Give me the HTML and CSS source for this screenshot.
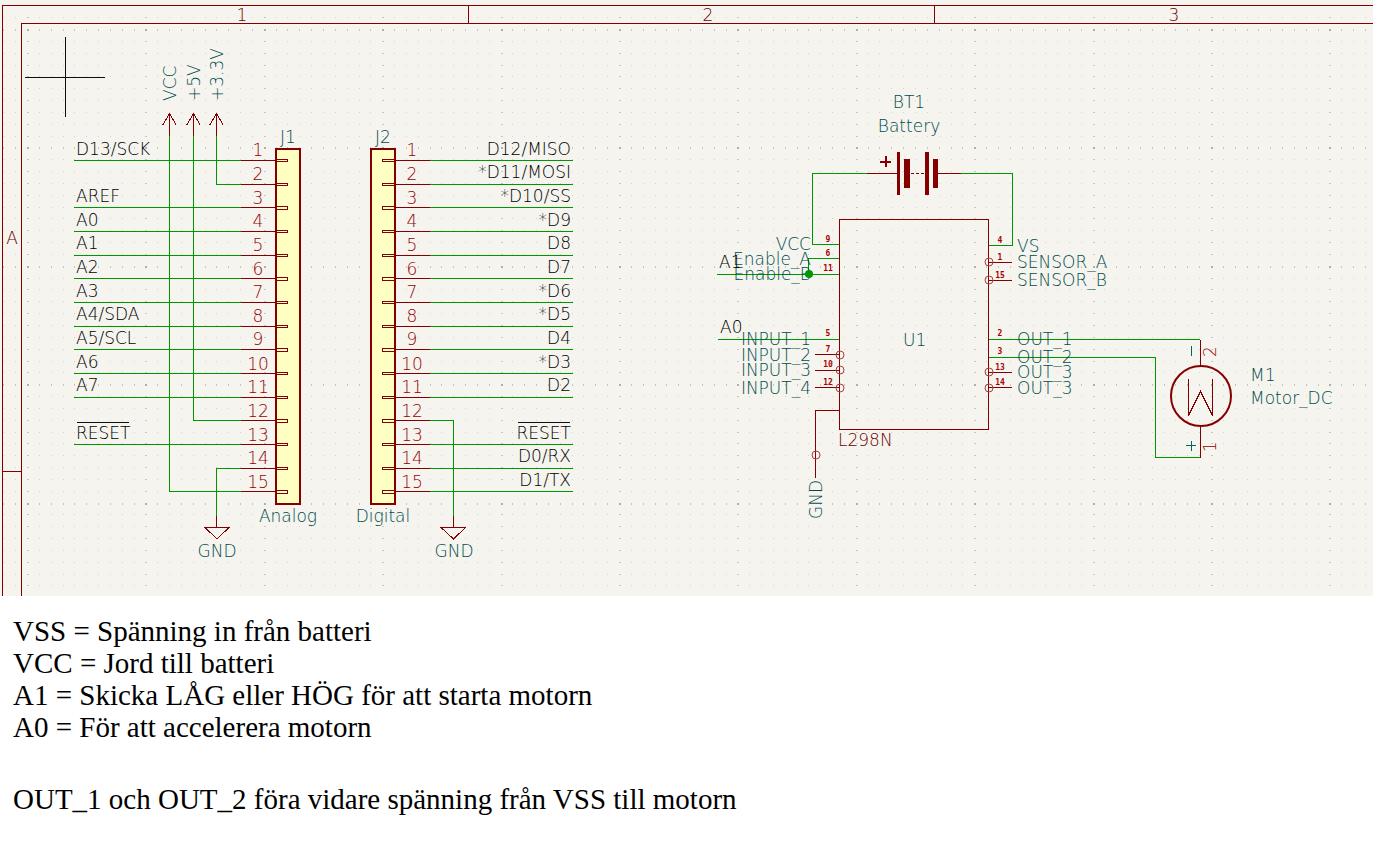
FILE: index.html
```html
<!DOCTYPE html>
<html lang="sv">
<head>
<meta charset="utf-8">
<title>L298N motor schematic</title>
<link rel="stylesheet" href="styles.css">
</head>
<body>
<main class="page">
<svg class="schematic" viewBox="0 0 1373 596" role="img" aria-label="Schematic">
  <g class="grid">
    <path class="grid-minor" id="grid-minor"/>
    <path class="grid-line" id="grid-line"/>
    <path class="grid-major" id="grid-major"/>
  </g>

  <!-- Sheet frame -->
  <path class="symbol" d="M1373 5.5H2.5V596M1373 23.5H21.5V596M468.5 5V23M934.5 5V23M2 471.5H21"/>
  <g class="text frame-text middle">
    <text x="242" y="21">1</text><text x="708" y="21">2</text><text x="1174" y="21">3</text>
    <text x="12" y="244">A</text>
  </g>
  <path class="cursor" d="M25 77.5H105M65.5 37V117"/>

  <!-- Wires -->
  <path class="wire" d="M74 160.5H241M74 207.5H241M74 231.5H241M74 255.5H241M74 278.5H241M74 302.5H241M74 326.5H241M74 349.5H241M74 373.5H241M74 397.5H241M74 444.5H241
    M169.5 136V491.5H241M193.5 136V420.5H241M216.5 136V184.5H241M241 468.5H216.5V516"/>
  <path class="wire" d="M430 160.5H573M430 184.5H573M430 207.5H573M430 231.5H573M430 255.5H573M430 278.5H573M430 302.5H573M430 326.5H573M430 349.5H573M430 373.5H573M430 397.5H573M430 444.5H573M430 468.5H573M430 491.5H573M430 420.5H453.5V516"/>
  <path class="wire" d="M867 173.5H812.5V244.5H839M961 173.5H1012.5V245.5H989M717 274.5H839M808.5 274V258.5H839M718 339.5H839M989 339.5H1200M989 357.5H1155.5V457.5H1200"/>

  <!-- Connector J1 -->
  <rect class="connector" x="276" y="149" width="24" height="355"/>
  <path class="symbol" d="M241 160.5H276M241 184.5H276M241 207.5H276M241 231.5H276M241 255.5H276M241 278.5H276M241 302.5H276M241 326.5H276M241 349.5H276M241 373.5H276M241 397.5H276M241 420.5H276M241 444.5H276M241 468.5H276M241 491.5H276"/>
  <path class="symbol" d="M276 159.5h11.5v2H276M276 183.5h11.5v2H276M276 206.5h11.5v3H276M276 230.5h11.5v2H276M276 254.5h11.5v2H276M276 277.5h11.5v3H276M276 301.5h11.5v2H276M276 325.5h11.5v2H276M276 348.5h11.5v3H276M276 372.5h11.5v2H276M276 396.5h11.5v2H276M276 419.5h11.5v3H276M276 443.5h11.5v2H276M276 467.5h11.5v2H276M276 490.5h11.5v3H276"/>
  <g class="text pin-text middle">
    <text x="258" y="156">1</text><text x="258" y="180">2</text><text x="258" y="204">3</text>
    <text x="258" y="227">4</text><text x="258" y="251">5</text><text x="258" y="275">6</text>
    <text x="258" y="298">7</text><text x="258" y="322">8</text><text x="258" y="345">9</text>
    <text x="258" y="370">10</text><text x="258" y="393">11</text><text x="258" y="417">12</text>
    <text x="258" y="441">13</text><text x="258" y="464">14</text><text x="258" y="488">15</text>
  </g>
  <g class="text label-text">
    <text x="76" y="155">D13/SCK</text><text x="76" y="202">AREF</text><text x="76" y="226">A0</text>
    <text x="76" y="249">A1</text><text x="76" y="273">A2</text><text x="76" y="297">A3</text>
    <text x="76" y="320">A4/SDA</text><text x="76" y="344">A5/SCL</text><text x="76" y="368">A6</text>
    <text x="76" y="391">A7</text><text x="76" y="439">RESET</text>
  </g>
  <path class="overline" d="M77 422.5H129M518 422.5H570"/>

  <!-- Connector J2 -->
  <rect class="connector" x="371" y="149" width="24" height="355"/>
  <path class="symbol" d="M395 160.5H430M395 184.5H430M395 207.5H430M395 231.5H430M395 255.5H430M395 278.5H430M395 302.5H430M395 326.5H430M395 349.5H430M395 373.5H430M395 397.5H430M395 420.5H430M395 444.5H430M395 468.5H430M395 491.5H430"/>
  <path class="symbol" d="M394 159.5h-11.5v2H394M394 183.5h-11.5v2H394M394 206.5h-11.5v3H394M394 230.5h-11.5v2H394M394 254.5h-11.5v2H394M394 277.5h-11.5v3H394M394 301.5h-11.5v2H394M394 325.5h-11.5v2H394M394 348.5h-11.5v3H394M394 372.5h-11.5v2H394M394 396.5h-11.5v2H394M394 419.5h-11.5v3H394M394 443.5h-11.5v2H394M394 467.5h-11.5v2H394M394 490.5h-11.5v3H394"/>
  <g class="text pin-text middle">
    <text x="412" y="156">1</text><text x="412" y="180">2</text><text x="412" y="204">3</text>
    <text x="412" y="227">4</text><text x="412" y="251">5</text><text x="412" y="275">6</text>
    <text x="412" y="298">7</text><text x="412" y="322">8</text><text x="412" y="345">9</text>
    <text x="412" y="370">10</text><text x="412" y="393">11</text><text x="412" y="417">12</text>
    <text x="412" y="441">13</text><text x="412" y="464">14</text><text x="412" y="488">15</text>
  </g>
  <g class="text label-text end">
    <text x="571" y="155">D12/MISO</text><text x="571" y="178">*D11/MOSI</text><text x="571" y="202">*D10/SS</text>
    <text x="571" y="226">*D9</text><text x="571" y="249">D8</text><text x="571" y="273">D7</text>
    <text x="571" y="297">*D6</text><text x="571" y="320">*D5</text><text x="571" y="344">D4</text>
    <text x="571" y="368">*D3</text><text x="571" y="391">D2</text><text x="571" y="439">RESET</text>
    <text x="571" y="462">D0/RX</text><text x="571" y="486">D1/TX</text>
  </g>
  <g class="text name-text middle">
    <text x="288" y="143">J1</text><text x="383" y="143">J2</text>
    <text x="288" y="522">Analog</text><text x="383" y="522">Digital</text>
    <text x="217" y="557">GND</text><text x="454" y="557">GND</text>
  </g>

  <!-- Power symbols -->
  <path class="symbol" d="M169.5 136V113M162.5 125.5L169.5 113.5L176.5 125.5M193.5 136V113M186.5 125.5L193.5 113.5L200.5 125.5M216.5 136V113M209.5 125.5L216.5 113.5L223.5 125.5
    M216.5 516V527.5M205 527.5H229L217 539ZM453.5 516V527.5M441 527.5H465.5L453.5 539Z"/>
  <g class="text name-text">
    <text transform="translate(176 101) rotate(-90)">VCC</text>
    <text transform="translate(200 101) rotate(-90)">+5V</text>
    <text transform="translate(223 101) rotate(-90)">+3.3V</text>
  </g>

  <!-- Battery BT1 -->
  <path class="symbol" d="M867 173.5H897M938 173.5H961M911 173.5H914M916 173.5H919M921 173.5H924"/>
  <path class="plate" d="M897 152h3v43h-3zM904 159h6v29h-6zM925 152h4v43h-4zM933 159h5v29h-5z"/>
  <path class="symbol-bold" d="M880 162H891M886 156V167"/>
  <g class="text name-text middle"><text x="909" y="108">BT1</text><text x="909" y="132">Battery</text></g>

  <!-- Driver U1 -->
  <rect class="symbol" x="839.5" y="219.5" width="149" height="210"/>
  <path class="symbol" d="M815 354.5H839M815 370.5H839M815 387.5H839M839 410.5H815.5V478M989 262.5H1012M989 280.5H1012M989 372.5H1012M989 387.5H1012"/>
  <g class="open-pin">
    <circle cx="840" cy="355" r="4"/><circle cx="840" cy="370" r="4"/><circle cx="840" cy="388" r="4"/>
    <circle cx="816" cy="455" r="4"/><circle cx="989" cy="262" r="4"/><circle cx="989" cy="280" r="4"/>
    <circle cx="989" cy="372" r="4"/><circle cx="989" cy="388" r="4"/>
  </g>
  <g class="text name-text end">
    <text x="811" y="250">VCC</text><text x="811" y="265">Enable_A</text><text x="811" y="280">Enable_B</text>
    <text x="811" y="345">INPUT_1</text><text x="811" y="361">INPUT_2</text><text x="811" y="376">INPUT_3</text><text x="811" y="394">INPUT_4</text>
  </g>
  <g class="text name-text">
    <text x="1017" y="252">VS</text><text x="1017" y="268">SENSOR_A</text><text x="1017" y="286">SENSOR_B</text>
    <text x="1017" y="345">OUT_1</text><text x="1017" y="363">OUT_2</text><text x="1017" y="378">OUT_3</text><text x="1017" y="394">OUT_3</text>
    <text x="903" y="346">U1</text>
    <text transform="translate(822 519) rotate(-90)">GND</text>
  </g>
  <text class="text frame-text" x="838" y="446">L298N</text>
  <g class="tiny-text middle">
    <text x="828" y="242">9</text><text x="828" y="256">6</text><text x="828" y="271">11</text>
    <text x="828" y="336">5</text><text x="828" y="352">7</text><text x="828" y="367">10</text><text x="828" y="385">12</text>
    <text x="1000" y="243">4</text><text x="1000" y="260">1</text><text x="1000" y="278">15</text>
    <text x="1000" y="336">2</text><text x="1000" y="354">3</text><text x="1000" y="370">13</text><text x="1000" y="385">14</text>
  </g>
  <g class="text label-text"><text x="719" y="268">A1</text><text x="720" y="333">A0</text></g>
  <circle class="junction" cx="809" cy="274" r="4"/>

  <!-- Motor M1 -->
  <circle class="motor" cx="1201" cy="396" r="30"/>
  <path class="symbol" d="M1200.5 340V366M1200.5 427V458M1188.5 379V415.5L1200.5 391.5L1212.5 415.5V379"/>
  <path class="polarity" d="M1191.5 346V356M1191.5 441V451M1186 445.5H1196"/>
  <g class="text pin-text">
    <text transform="translate(1216 357) rotate(-90)">2</text>
    <text transform="translate(1216 452) rotate(-90)">1</text>
  </g>
  <g class="text name-text"><text x="1250" y="381">M1</text><text x="1250" y="404">Motor_DC</text></g>
</svg>

<section class="notes">
  <p>VSS = Spänning in från batteri<br>VCC = Jord till batteri<br>A1 = Skicka LÅG eller HÖG för att starta motorn<br>A0 = För att accelerera motorn</p>
  <p>OUT_1 och OUT_2 föra vidare spänning från VSS till motorn</p>
</section>
</main>
<script src="grid.js"></script>
</body>
</html>
```
FILE: styles.css
```css
body {
  margin: 0;
  background: #fff;
}

.schematic {
  display: block;
  width: 100%;
  height: auto;
  background: #f5f4ef;
}

.schematic path,
.schematic rect {
  shape-rendering: crispEdges;
}

.grid-minor { fill: #d3d2ce; }
.grid-line { fill: #c6c5c1; }
.grid-major { fill: #aeaeab; }

.symbol {
  fill: none;
  stroke: #840000;
}

.symbol-bold {
  fill: none;
  stroke: #840000;
  stroke-width: 2;
}

.wire {
  fill: none;
  stroke: #009600;
}

.cursor,
.overline {
  fill: none;
  stroke: #0f0f0f;
}

.connector {
  fill: #ffffc2;
  stroke: #840000;
  stroke-width: 2;
}

.plate { fill: #840000; }
.junction { fill: #009600; }

.open-pin {
  fill: none;
  stroke: #a94040;
}

.motor {
  fill: none;
  stroke: #840000;
  stroke-width: 2;
}

.polarity {
  fill: none;
  stroke: #006464;
}

.text {
  font-family: "DejaVu Sans", sans-serif;
  font-size: 17px;
  font-weight: 200;
}

.tiny-text {
  font-family: "DejaVu Sans Mono", monospace;
  font-size: 8px;
  font-weight: 700;
  fill: #a90000;
}

.frame-text { fill: #6c0000; }
.pin-text { fill: #960000; }
.label-text { fill: #000; }
.name-text { fill: #004c4c; }
.middle { text-anchor: middle; }
.end { text-anchor: end; }

.notes {
  padding: 19px 13px;
  color: #000;
  font-family: "Liberation Serif", "Times New Roman", serif;
  font-size: 29px;
  line-height: 32px;
}

.notes p {
  margin: 0 0 40px;
}

.notes p:last-child {
  margin: 0;
}
```
FILE: grid.js
```js
// Fills the sheet with grid dots; every tenth row and column is emphasised.
const pitch = 11.84;
const paths = { minor: "", line: "", major: "" };

for (let row = -2; row < 49; row++) {
  for (let col = -2; col < 115; col++) {
    const x = Math.round(28 + col * pitch) - 1;
    const y = Math.round(30 + row * pitch) - 1;
    if (x < 0 || y < 0) continue;
    const wide = col % 10 === 0 ? 2 : 1;
    const tall = row % 10 === 0 ? 2 : 1;
    const kind = ["minor", "line", "major"][wide + tall - 2];
    paths[kind] += `M${x} ${y}h${wide}v${tall}h${-wide}z`;
  }
}

for (const kind in paths) {
  document.getElementById(`grid-${kind}`).setAttribute("d", paths[kind]);
}
```
